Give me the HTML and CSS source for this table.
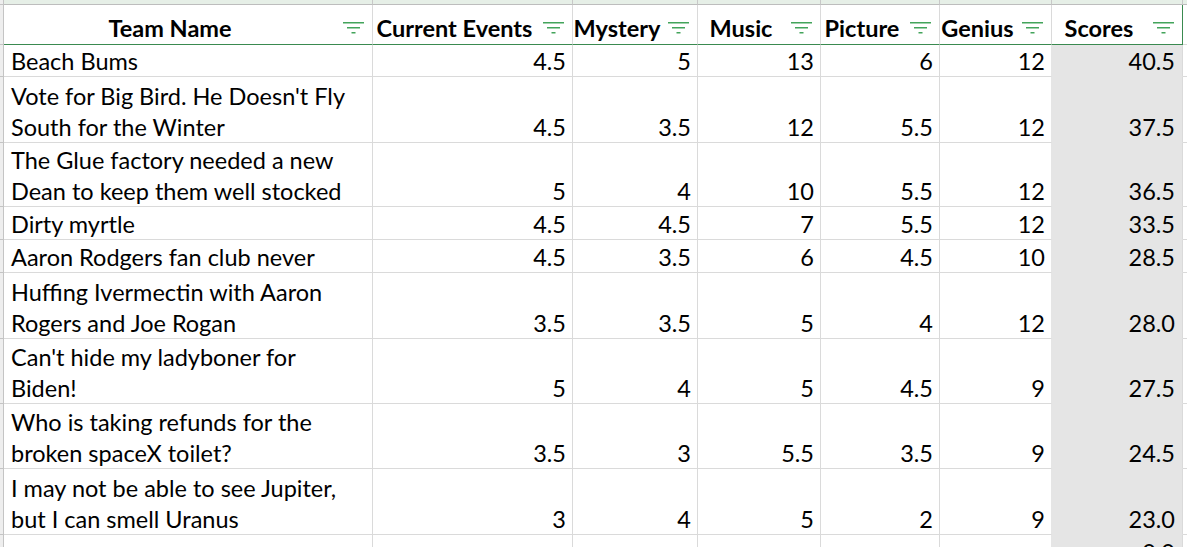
FILE: index.html
```html
<!DOCTYPE html>
<html>
<head>
<meta charset="utf-8">
<link rel="stylesheet" href="styles.css">
</head>
<body>
<div class="sheet">
  <div class="c top stub"></div><div class="c top"></div><div class="c top"></div><div class="c top"></div><div class="c top"></div><div class="c top"></div><div class="c top"></div><div class="c top"></div><div class="c top fill"></div>

  <div class="c stub"></div>
  <div class="c hd"><span class="lbl">Team Name</span><svg class="flt" viewBox="0 0 21 12"><path d="M0 0h21v1.5H0zM4 5h13v1.5H4zM8.5 10h4v1.5h-4z"/></svg></div>
  <div class="c hd"><span class="lbl">Current Events</span><svg class="flt" viewBox="0 0 21 12"><path d="M0 0h21v1.5H0zM4 5h13v1.5H4zM8.5 10h4v1.5h-4z"/></svg></div>
  <div class="c hd"><span class="lbl">Mystery</span><svg class="flt" viewBox="0 0 21 12"><path d="M0 0h21v1.5H0zM4 5h13v1.5H4zM8.5 10h4v1.5h-4z"/></svg></div>
  <div class="c hd"><span class="lbl">Music</span><svg class="flt" viewBox="0 0 21 12"><path d="M0 0h21v1.5H0zM4 5h13v1.5H4zM8.5 10h4v1.5h-4z"/></svg></div>
  <div class="c hd"><span class="lbl">Picture</span><svg class="flt" viewBox="0 0 21 12"><path d="M0 0h21v1.5H0zM4 5h13v1.5H4zM8.5 10h4v1.5h-4z"/></svg></div>
  <div class="c hd"><span class="lbl">Genius</span><svg class="flt" viewBox="0 0 21 12"><path d="M0 0h21v1.5H0zM4 5h13v1.5H4zM8.5 10h4v1.5h-4z"/></svg></div>
  <div class="c hd last"><span class="lbl">Scores</span><svg class="flt" viewBox="0 0 21 12"><path d="M0 0h21v1.5H0zM4 5h13v1.5H4zM8.5 10h4v1.5h-4z"/></svg></div>
  <div class="c fill"></div>

  <div class="c stub"></div><div class="c txt"><span>Beach Bums</span></div><div class="c num"><span>4.5</span></div><div class="c num"><span>5</span></div><div class="c num"><span>13</span></div><div class="c num"><span>6</span></div><div class="c num"><span>12</span></div><div class="c num score"><span>40.5</span></div><div class="c fill"></div>

  <div class="c stub"></div><div class="c txt"><span>Vote for Big Bird. He Doesn't Fly<br>South for the Winter</span></div><div class="c num"><span>4.5</span></div><div class="c num"><span>3.5</span></div><div class="c num"><span>12</span></div><div class="c num"><span>5.5</span></div><div class="c num"><span>12</span></div><div class="c num score"><span>37.5</span></div><div class="c fill"></div>

  <div class="c stub"></div><div class="c txt"><span>The Glue factory needed a new<br>Dean to keep them well stocked</span></div><div class="c num"><span>5</span></div><div class="c num"><span>4</span></div><div class="c num"><span>10</span></div><div class="c num"><span>5.5</span></div><div class="c num"><span>12</span></div><div class="c num score"><span>36.5</span></div><div class="c fill"></div>

  <div class="c stub"></div><div class="c txt"><span>Dirty myrtle</span></div><div class="c num"><span>4.5</span></div><div class="c num"><span>4.5</span></div><div class="c num"><span>7</span></div><div class="c num"><span>5.5</span></div><div class="c num"><span>12</span></div><div class="c num score"><span>33.5</span></div><div class="c fill"></div>

  <div class="c stub"></div><div class="c txt"><span>Aaron Rodgers fan club never</span></div><div class="c num"><span>4.5</span></div><div class="c num"><span>3.5</span></div><div class="c num"><span>6</span></div><div class="c num"><span>4.5</span></div><div class="c num"><span>10</span></div><div class="c num score"><span>28.5</span></div><div class="c fill"></div>

  <div class="c stub"></div><div class="c txt"><span>Huffing Ivermectin with Aaron<br>Rogers and Joe Rogan</span></div><div class="c num"><span>3.5</span></div><div class="c num"><span>3.5</span></div><div class="c num"><span>5</span></div><div class="c num"><span>4</span></div><div class="c num"><span>12</span></div><div class="c num score"><span>28.0</span></div><div class="c fill"></div>

  <div class="c stub"></div><div class="c txt"><span>Can't hide my ladyboner for<br>Biden!</span></div><div class="c num"><span>5</span></div><div class="c num"><span>4</span></div><div class="c num"><span>5</span></div><div class="c num"><span>4.5</span></div><div class="c num"><span>9</span></div><div class="c num score"><span>27.5</span></div><div class="c fill"></div>

  <div class="c stub"></div><div class="c txt"><span>Who is taking refunds for the<br>broken spaceX toilet?</span></div><div class="c num"><span>3.5</span></div><div class="c num"><span>3</span></div><div class="c num"><span>5.5</span></div><div class="c num"><span>3.5</span></div><div class="c num"><span>9</span></div><div class="c num score"><span>24.5</span></div><div class="c fill"></div>

  <div class="c stub"></div><div class="c txt"><span>I may not be able to see Jupiter,<br>but I can smell Uranus</span></div><div class="c num"><span>3</span></div><div class="c num"><span>4</span></div><div class="c num"><span>5</span></div><div class="c num"><span>2</span></div><div class="c num"><span>9</span></div><div class="c num score"><span>23.0</span></div><div class="c fill"></div>

  <div class="c stub"></div><div class="c txt"></div><div class="c num"></div><div class="c num"></div><div class="c num"></div><div class="c num"></div><div class="c num"></div><div class="c num score"><span>0.0</span></div><div class="c fill"></div>
</div>
</body>
</html>
```

FILE: styles.css
```css
html, body {
  margin: 0;
  padding: 0;
  background: #ffffff;
}

body {
  font-family: Lato, "Liberation Sans", sans-serif;
  color: #000000;
  overflow: hidden;
}

.sheet {
  display: grid;
  grid-template-columns: 4px 369px 200px 125px 123px 119px 112px 131px 1fr;
  grid-template-rows: 5px 40px 32px 66px 64px 33px 33px 66px 65px 65px 66px 33px;
  height: 547px;
  overflow: hidden;
}

.c {
  box-sizing: border-box;
  border-right: 1px solid #dadada;
  border-bottom: 1px solid #dadada;
  display: flex;
  align-items: flex-end;
  font-size: 23.5px;
  line-height: 31px;
  white-space: nowrap;
  overflow: hidden;
  min-width: 0;
}

.c > span {
  margin-bottom: -1px;
}

.top {
  background: #e6efe7;
  border-right-color: #c8c8c8;
  border-bottom-color: #bdbdbd;
}

.stub {
  background: #eeeeee;
  border-right-color: #c4c4c4;
  border-bottom-color: #c4c4c4;
}

.fill {
  border-right: none;
}

.hd {
  font-weight: 700;
  border-bottom: 1px solid #3a8a50;
}

.hd .lbl {
  flex: 1;
  text-align: center;
  margin-bottom: 0;
}

.hd.last {
  border-right: 1px solid #3a8a50;
}

.flt {
  flex: none;
  width: 21px;
  height: 12px;
  margin: 0 8px 10px 7px;
  fill: #43a45b;
}

.txt {
  padding-left: 7px;
}

.num {
  justify-content: flex-end;
  padding-right: 6px;
}

.score {
  background: #e5e5e5;
  border-bottom-color: #e5e5e5;
  padding-right: 7px;
}

.c:has(+ .score) {
  border-right-color: #e5e5e5;
}
```
